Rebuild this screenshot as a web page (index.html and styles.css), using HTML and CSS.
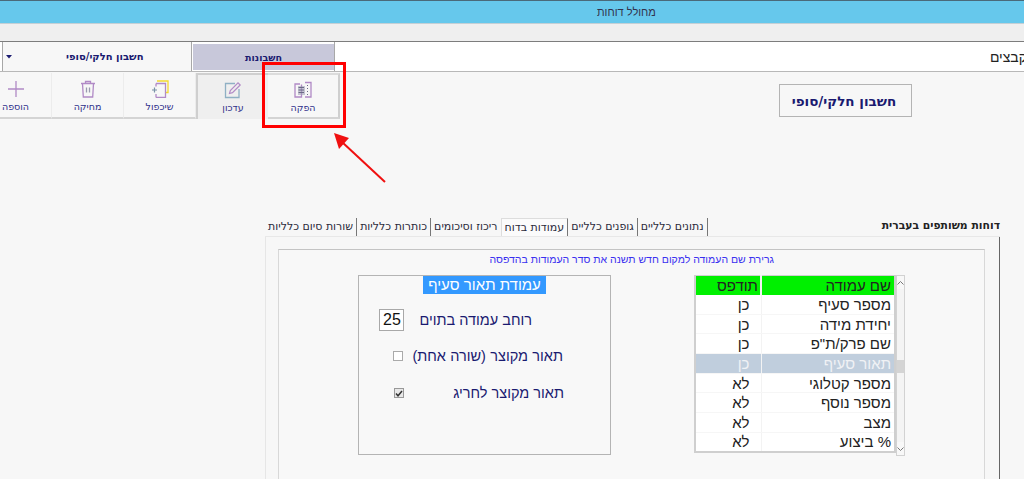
FILE: index.html
```html
<!DOCTYPE html>
<html lang="he">
<head>
<meta charset="utf-8">
<title>מחולל דוחות</title>
<link rel="stylesheet" href="styles.css">
</head>
<body>
<div class="page">
  <header class="titlebar"><span class="title">מחולל דוחות</span></header>
  <div class="menustrip"></div>
  <nav class="navrow">
    <div class="combo">
      <svg class="caret" width="7" height="4" viewBox="0 0 7 4"><path d="M0 0h6L3 3.500z" fill="#1a1a70"/></svg>
      <span class="combo-text">חשבון חלקי/סופי</span>
    </div>
    <div class="navtab">חשבונות</div>
    <div class="navfill"><span class="navfile">קבצים</span></div>
  </nav>
  <main class="work">
    <section class="toprow">
      <div class="toolbar" dir="ltr">
        <button class="tool tool-add">
          <svg width="18" height="18" viewBox="0 0 18 18"><path d="M9 1v16M1 9h16" stroke="#b18ac6" stroke-width="1.300" fill="none"/></svg>
          <span>הוספה</span>
        </button>
        <button class="tool">
          <svg width="18" height="18" viewBox="0 0 18 18" fill="none" stroke="#b18ac6" stroke-width="1.300"><path d="M2 3.500h14M6.500 3.500V1.500h5v2M3.500 3.500l.8 13.500h9.400l.8-13.500"/><path d="M7.500 7.500v5M10.500 7.500v5" stroke="#9a9ab0"/></svg>
          <span>מחיקה</span>
        </button>
        <button class="tool">
          <svg width="18" height="18" viewBox="0 0 18 18" fill="none"><path d="M6 1h11v11.500h-3" stroke="#f4d92e" stroke-width="1.300"/><path d="M5 3.500h9.500v14H5M5 3.500v3M5 14v3.500" stroke="#b18ac6" stroke-width="1.300"/><path d="M1 10h5M3.500 7.500v5" stroke="#7a92a8" stroke-width="1.200"/></svg>
          <span>שיכפול</span>
        </button>
        <button class="tool tool-active">
          <svg width="18" height="18" viewBox="0 0 18 18" fill="none"><path d="M11 2.500H1.500v14h13.500V8" stroke="#8fb0c4" stroke-width="1.300"/><path d="M5.500 12.500l.8-3L14 1.800l2.200 2.200-7.700 7.700z" stroke="#b18ac6" stroke-width="1.200"/></svg>
          <span>עדכון</span>
        </button>
        <button class="tool tool-issue">
          <svg width="18" height="18" viewBox="0 0 18 18" fill="none"><path d="M6 3H1v13h6.500V3.500M11 1.500h6v14.500h-6" stroke="#b18ac6" stroke-width="1.300" /><rect x="4" y="5" width="7" height="9" fill="#9d9db4" opacity=".55"/><path d="M4.500 6.500H10M4.500 9H10M4.500 11.500H10M13.500 4v1M13.500 7v1M13.500 10v1M13.500 13v1" stroke="#6b6b86"/></svg>
          <span>הפקה</span>
        </button>
      </div>
      <div class="kindbtn">חשבון חלקי/סופי</div>
    </section>

    <section class="reports" dir="rtl">
      <div class="reports-head">
        <h2 class="reports-title">דוחות משותפים בעברית</h2>
        <ul class="tabs">
          <li class="tab">נתונים כלליים</li>
          <li class="tab">גופנים כלליים</li>
          <li class="tab tab-on">עמודות בדוח</li>
          <li class="tab tab-after">ריכוז וסיכומים</li>
          <li class="tab">כותרות כלליות</li>
          <li class="tab">שורות סיום כלליות</li>
        </ul>
      </div>
      <div class="panel">
        <div class="innerbox">
          <p class="hint">גרירת שם העמודה למקום חדש תשנה את סדר העמודות בהדפסה</p>
          <div class="columns">
            <div class="gridwrap" dir="ltr">
              <table class="grid" dir="rtl">
                <colgroup><col class="col-name"><col class="col-print"></colgroup>
                <thead><tr><th>שם עמודה</th><th>תודפס</th></tr></thead>
                <tbody>
                  <tr><td>מספר סעיף</td><td>כן</td></tr>
                  <tr><td>יחידת מידה</td><td>כן</td></tr>
                  <tr><td>שם פרק/ת"פ</td><td>כן</td></tr>
                  <tr class="sel"><td>תאור סעיף</td><td>כן</td></tr>
                  <tr><td>מספר קטלוגי</td><td>לא</td></tr>
                  <tr><td>מספר נוסף</td><td>לא</td></tr>
                  <tr><td>מצב</td><td>לא</td></tr>
                  <tr><td>% ביצוע</td><td>לא</td></tr>
                </tbody>
              </table>
              <div class="scrollbar">
                <span class="sb-btn"><svg width="7" height="4" viewBox="0 0 7 4"><path d="M.5 3.500l3-3 3 3" fill="none" stroke="#777"/></svg></span>
                <span class="sb-track"><span class="sb-thumb"></span></span>
                <span class="sb-btn"><svg width="7" height="4" viewBox="0 0 7 4"><path d="M.5.500l3 3 3-3" fill="none" stroke="#777"/></svg></span>
              </div>
            </div>
            <div class="detail">
              <div class="detail-head"><span class="detail-title">עמודת תאור סעיף</span></div>
              <div class="field field-width">
                <span class="field-label">רוחב עמודה בתוים</span>
                <span class="numbox">25</span>
              </div>
              <div class="field field-check1">
                <span class="field-label">תאור מקוצר (שורה אחת)</span>
                <span class="check"></span>
              </div>
              <div class="field field-check2">
                <span class="field-label">תאור מקוצר לחריג</span>
                <span class="check check-on"><svg width="8" height="7" viewBox="0 0 8 7"><path d="M1 3.500l2 2.300L7 1" fill="none" stroke="#333" stroke-width="1.500"/></svg></span>
              </div>
            </div>
          </div>
        </div>
      </div>
    </section>
  </main>

  <div class="redbox"></div>
  <svg class="redarrow" width="60" height="60" viewBox="0 0 60 60"><path d="M54 52L11 12" stroke="#f01010" stroke-width="2" fill="none"/><path d="M3 3l15 5-10 11z" fill="#f01010"/></svg>
</div>
</body>
</html>
```
FILE: styles.css
```css
* { box-sizing: border-box; }
html, body { margin: 0; padding: 0; }
body { font-family: "Liberation Sans", "DejaVu Sans", sans-serif; background: #f7f7f7; }
.page { position: relative; width: 1024px; height: 479px; overflow: hidden; }

.titlebar { height: 24px; background: #66c8ec; border-top: 1px solid #4a6a7a; border-bottom: 1px solid #c4d0d6; display: flex; align-items: center; padding-left: 597px; }
.title { font-size: 11px; color: #33334d; }
.menustrip { height: 18px; background: #efefef; border-bottom: 1px solid #7d7d7d; }

.navrow { display: flex; height: 30px; background: #fff; border-bottom: 1px solid #b8b8b8; }
.combo { width: 190px; margin-left: 2px; background: #f7f7f7; border-left: 1px solid #a8a8a8; border-right: 1px solid #a8a8a8; display: flex; align-items: center; padding-left: 3px; }
.combo-text { direction: rtl; font: bold 10px "DejaVu Sans", sans-serif; color: #1a1a70; margin-left: 53px; }
.navtab { width: 141px; margin: 2px 0 1px 1px; background: #c8c8da; display: flex; align-items: center; justify-content: center; font: bold 9.500px "DejaVu Sans", sans-serif; color: #1a1a70; direction: rtl; }
.navfill { flex: 1; display: flex; justify-content: flex-end; align-items: center; overflow: hidden; border-left: 1px solid #a8a8a8; }
.navfile { font-size: 14px; color: #222; direction: rtl; white-space: nowrap; margin-right: -3px; padding-top: 1px; }

.work { display: flex; flex-direction: column; }
.toprow { display: flex; justify-content: space-between; align-items: flex-start; height: 146px; padding-right: 112px; }

.toolbar { display: flex; margin-left: -20px; margin-top: 1px; height: 46px; }
.tool { width: 72px; height: 46px; padding: 7px 0 0; background: #f7f7f7; border: 0; border-right: 1px solid #ececec; border-bottom: 2px solid #d4d4d4; display: flex; flex-direction: column; align-items: center; gap: 3px; font: 9.500px "DejaVu Sans", sans-serif; color: #2f2f8a; direction: rtl; }
.tool svg { display: block; }
.tool-active { background: #efefef; border: 0; border-left: 2px solid #cfcfcf; border-top: 2px solid #cfcfcf; padding-top: 6px; }
.tool-issue { border-top: 2px solid #dcdcdc; border-right: 2px solid #cfcfcf; padding-top: 6px; }
.kindbtn { direction: rtl; margin-top: 12px; width: 133px; height: 33px; padding-right: 3px; background: #f7f7f7; border: 1px solid #b4b4b4; display: flex; align-items: center; justify-content: center; font: bold 13.500px "DejaVu Sans", sans-serif; color: #1a1a70; }

.reports { margin-left: 265px; width: 735px; }
.reports-head { display: flex; align-items: flex-start; height: 19px; border-bottom: 1px solid #e8e8e8; }
.reports-title { margin: 0; width: 293px; padding-top: 1px; font: bold 10.800px "DejaVu Sans", sans-serif; color: #222; }
.tabs { list-style: none; margin: 0; padding: 0; display: flex; }
.tab { height: 18px; padding: 2px 3px 0 3px; font: 11px "DejaVu Sans", sans-serif; color: #2a2a3a; white-space: nowrap; border-right: 1px solid #777; }
.tab-on { background: #fbfbfb; border-top: 1px solid #ddd; border-left: 1px solid #ddd; }
.tab-after { border-right: 0; }

.panel { height: 245px; border-right: 1px solid #666; border-left: 1px solid #e6e6e6; padding: 12px 14px 0 12px; }
.innerbox { height: 240px; background: #f8f8f8; border-top: 1px solid #c4c4c4; border-right: 1px solid #d8d8d8; border-left: 1px solid #d8d8d8; }
.hint { margin: 0; height: 25px; padding: 3px 210px 0 0; font-size: 10.500px; color: #3a30f0; white-space: nowrap; }
.columns { display: flex; align-items: flex-start; padding-right: 79px; gap: 83px; }

.gridwrap { display: flex; width: 211px; }
.grid { width: 200px; height: 178px; table-layout: fixed; border-collapse: collapse; background: #fff; border: 1px solid #cfcfcf; border-width: 1px 2px 2px 2px; font-size: 15px; color: #222; }
.col-name { width: 134px; }
.col-print { width: 66px; }
.grid th { height: 19px; padding: 0 3px 0 0; background: #00f000; color: #222; font-weight: normal; text-align: right; border-left: 2px solid #f2f2f2; }
.grid th:last-child { border-left: 0; padding-right: 2px; }
.grid td { height: 19.500px; padding: 0 3px 0 0; text-align: right; border-bottom: 1px solid #f6f6f6; border-left: 1px solid #f3f3f3; line-height: 17px; }
.grid td:last-child { padding-right: 11px; border-left: 0; }
.sel td { background: #c0cedd; color: #f0f2f5; }
.scrollbar { width: 11px; height: 181px; background: #f4f4f4; border: 1px solid #d2d2d2; display: flex; flex-direction: column; }
.sb-btn { height: 13px; display: flex; align-items: center; justify-content: center; background: #f8f8f8; }
.sb-track { flex: 1; padding-top: 71px; }
.sb-thumb { display: block; height: 13px; background: #d4d4d4; }

.detail { width: 253px; height: 180px; border: 1px solid #b4b4b4; background: #f8f8f8; color: #1a1a70; }
.detail-head { text-align: center; height: 18px; }
.detail-title { display: inline-block; height: 18px; width: 123px; background: #3399ff; color: #fff; font-size: 15px; line-height: 18px; white-space: nowrap; }
.field { display: flex; align-items: center; font-size: 14.500px; white-space: nowrap; }
.field-label { color: #1a1a70; }
.field-width { padding-right: 78px; margin-top: 15px; height: 22px; gap: 15px; }
.numbox { width: 25px; height: 22px; border: 1px solid #a8a8a8; background: #fff; color: #111; font-size: 16px; display: flex; align-items: center; justify-content: center; }
.field-check1 { padding-right: 47px; margin-top: 15px; height: 20px; gap: 9px; word-spacing: .3px; }
.field-check2 { padding-right: 46px; margin-top: 17px; height: 20px; }
.check { display: block; width: 10px; height: 10px; border: 1px solid #aaa; background: #fff; }
.check-on { background: #e8e8e8; border-color: #999; display: flex; align-items: center; justify-content: center; margin-right: 49px; }

.redbox { position: absolute; left: 262px; top: 62px; width: 84px; height: 66px; border: 3px solid #f00; }
.redarrow { position: absolute; left: 331px; top: 130px; }
```
